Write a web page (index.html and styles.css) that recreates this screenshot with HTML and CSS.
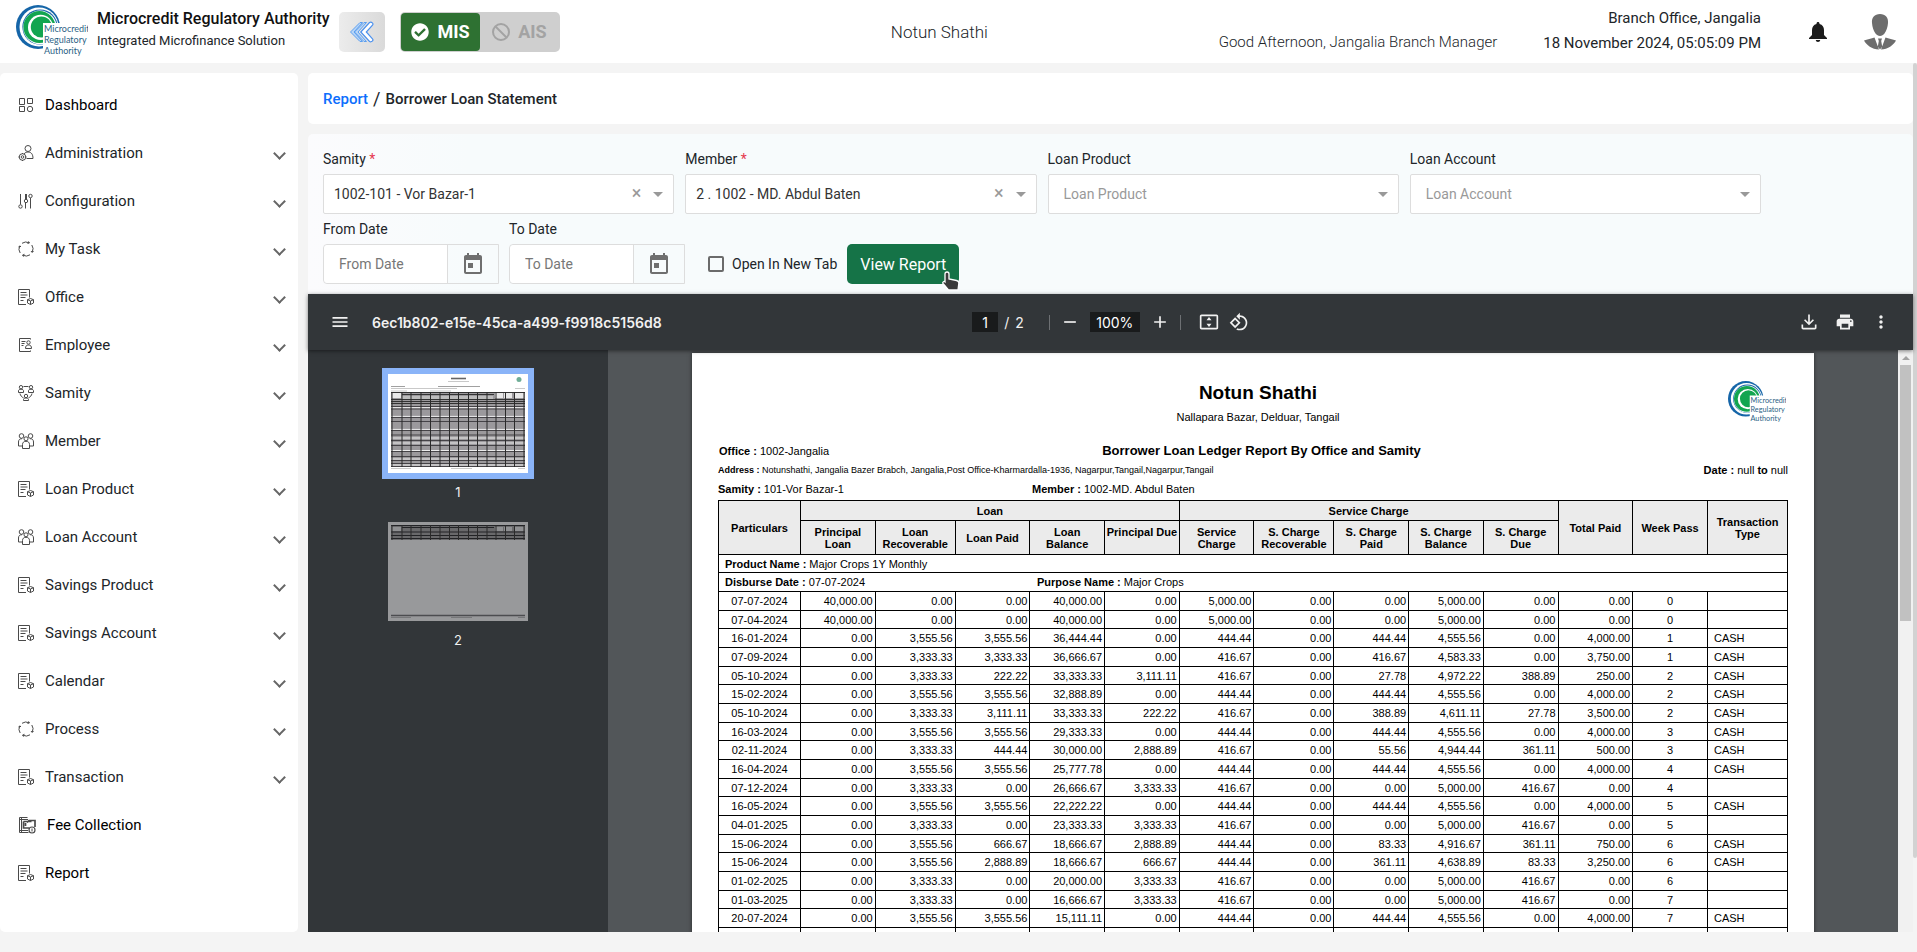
FILE: index.html
```html
<!DOCTYPE html>
<html lang="en">
<head>
    <meta charset="UTF-8">
    <meta name="viewport" content="width=device-width, initial-scale=1.0">
    <title>Borrower Loan Statement</title>
    <link rel="stylesheet" href="styles.css">
</head>
<body>

<!-- Shared icons -->
<svg class="sprite" aria-hidden="true">
    <symbol id="logo" viewBox="0 0 72 52">
        <circle cx="22" cy="22" r="22" fill="#1565a8"/>
        <circle cx="23" cy="22" r="19.5" fill="#fff"/>
        <circle cx="24" cy="22" r="17.6" fill="#1565a8"/>
        <circle cx="24" cy="22.4" r="16.8" fill="#fff"/>
        <circle cx="23.4" cy="22" r="16" fill="#12a550"/>
        <circle cx="24.6" cy="22.4" r="12.6" fill="#fff"/>
        <circle cx="25.4" cy="22" r="10.6" fill="#12a550"/>
        <path d="M27 18h45v34H27z" fill="#fff"/>
        <g fill="#2c5f85" font-family="Lato, sans-serif" font-size="9">
            <text x="28" y="27">Microcredit</text>
            <text x="28" y="38">Regulatory</text>
            <text x="28" y="49">Authority</text>
        </g>
    </symbol>
    <symbol id="i-dashboard" viewBox="0 0 16 16">
        <path d="M1.500 1.500h5v6h-5zM9.500 1.500h5v5h-5zM1.500 9.500h5v5h-5z"/>
        <circle cx="12" cy="12" r="2.700"/>
    </symbol>
    <symbol id="i-admin" viewBox="0 0 16 16">
        <circle cx="10" cy="3.500" r="3"/>
        <path d="M6 9c1-1.500 2.500-2 4-2 3.500 0 5 2.500 5 6.500H8.500"/>
        <circle cx="4.500" cy="12" r="3.300"/>
        <circle cx="4.500" cy="12" r="1.300"/>
        <path d="M4.500 8v1M4.500 15v1M.5 12h1M7.500 12h1"/>
    </symbol>
    <symbol id="i-config" viewBox="0 0 16 16">
        <path d="M2.500 1v10.500M7.500 1v5M7.500 10v5.500M8.500 1v5M12.500 5v10.500"/>
        <circle cx="2.500" cy="13.500" r="1.700"/>
        <circle cx="8" cy="8" r="1.700"/>
        <circle cx="12.500" cy="3" r="1.700"/>
    </symbol>
    <symbol id="i-cycle" viewBox="0 0 16 16">
        <path d="M4 2.300A7 7 0 0 1 11 1.700M13.800 4A7 7 0 0 1 14.300 11M12 13.800A7 7 0 0 1 5 14.300M2.200 12A7 7 0 0 1 1.700 5"/>
        <path d="M9.500 2.500l2-.6-1-1.500M13 10l1.200 1.500 1.300-1.500M6.500 13.300l-2 .8 1 1.500M.5 6.300l1.300-1.500L3 6"/>
    </symbol>
    <symbol id="i-doc" viewBox="0 0 16 16">
        <path d="M8 15.500H.5V.5h11v8M2.500 3.500h6M2.500 6h7M2.500 8.500h5M2.500 11.500h3"/>
        <path d="M12.500 9.500l3 1.200v3.300l-3 1.500-3-1.500v-3.300zM9.500 10.700l3 1.300 3-1.300M12.500 12v3.500"/>
    </symbol>
    <symbol id="i-employee" viewBox="0 0 16 16">
        <path d="M12.500 2.500v-1h-11v13h11v-1M3.500 4.500h4M3.500 6.500h3M3.500 8.500h2"/>
        <circle cx="10.500" cy="5.500" r="1.700"/>
        <path d="M7.500 11.500c0-2.500 1-3.500 3-3.500s3 1 3 3.500z"/>
    </symbol>
    <symbol id="i-samity" viewBox="0 0 16 16">
        <circle cx="3" cy="2.200" r="1.700"/>
        <circle cx="13" cy="2.200" r="1.700"/>
        <circle cx="8" cy="11" r="1.700"/>
        <path d="M.5 7.500V5.800c0-1 1-1.600 2.500-1.600s2.500.6 2.500 1.600v1.700zM10.500 7.500V5.800c0-1 1-1.600 2.500-1.600s2.500.6 2.500 1.600v1.700zM5.500 15.500v-1c0-1 1-1.500 2.500-1.500s2.500.5 2.500 1.500v1zM5.500 1.500h5M2 8.500c.5 2 1.500 3.500 3.500 4.300M14 8.500c-.5 2-1.500 3.500-3.500 4.300"/>
    </symbol>
    <symbol id="i-people" viewBox="0 0 16 16">
        <circle cx="3.500" cy="3" r="2.300"/>
        <circle cx="12.500" cy="3" r="2.300"/>
        <circle cx="8" cy="5.800" r="2"/>
        <path d="M4.500 15.500v-4c0-2 1.300-3.200 3.500-3.200s3.500 1.200 3.500 3.200v4zM4 13H.5V9c0-2 1-3.300 3.500-3.300M12 13h3.500V9c0-2-1-3.300-3.500-3.300"/>
    </symbol>
    <symbol id="i-fee" viewBox="0 0 18 18">
        <path d="M9.500 1.500h-8v15h9M3.500 2v14M2 3.500h8M2 14.500h8"/>
        <path d="M5.500 5.500h8M5.500 5.500v6.500h6M7.500 7v3M9 6.500l2-2h6V11" stroke-width="1.700"/>
        <circle cx="14" cy="14" r="3" stroke-width="1.200"/>
        <path d="M14 12.500v3"/>
    </symbol>
    <symbol id="i-calendar" viewBox="0 0 24 24">
        <path d="M19 3h-1V1h-2v2H8V1H6v2H5c-1.110 0-2 .9-2 2v15c0 1.100.9 2 2 2h14c1.100 0 2-.9 2-2V5c0-1.100-.9-2-2-2zm0 17H5V8h14v12zM7 11h5v5H7z"/>
    </symbol>
    <!-- Grid of the report pages, used by both thumbnails -->
    <symbol id="thumb-cols" viewBox="0 0 134 80" preserveAspectRatio="xMidYMin slice">
        <path d="M1 0v80M11 0v80M20 0v80M30 0v80M39.500 0v80M49 0v80M58.500 0v80M67.500 0v80M77.500 0v80M86.500 0v80M96 0v80M105 0v80M114.500 0v80M123.500 0v80M133 0v80" stroke="#2a2a2a"/>
    </symbol>
</svg>

<header class="topbar">
    <div class="brand">
        <svg class="brand-logo" role="img" aria-label="Logo"><use href="#logo"/></svg>
        <div class="brand-text">
            <h1>Microcredit Regulatory Authority</h1>
            <p>Integrated Microfinance Solution</p>
        </div>
    </div>
    <button class="collapse-btn" aria-label="Collapse menu">
        <svg viewBox="0 0 26 22" width="26" height="22">
            <path d="M11 1.500h2.500L5 11l8.500 9.500H11L1.500 11zM15 1.500h2.500L9 11l8.500 9.500H15L5.500 11z" fill="#b9d6f7" stroke="#5c9ff0"/>
            <path d="M20.500 1.500c2-1 4.500 1 3 2.700L17.300 11l6.200 6.800c1.500 1.700-1 3.700-3 2.700L11.800 11z" fill="#fff" stroke="#4a90ee" stroke-width="1.200"/>
        </svg>
    </button>
    <div class="mode-toggle">
        <button class="mode active">
            <svg viewBox="0 0 512 512" width="18" height="18"><path fill="currentColor" d="M504 256c0 137-111 248-248 248S8 393 8 256 119 8 256 8s248 111 248 248zM227.300 387.300l184-184c6.200-6.200 6.200-16.400 0-22.600l-22.600-22.600c-6.200-6.200-16.400-6.200-22.600 0L216 308.100l-70.100-70.100c-6.200-6.200-16.400-6.200-22.600 0l-22.600 22.600c-6.200 6.200-6.200 16.400 0 22.600l104 104c6.200 6.300 16.400 6.300 22.600.1z"/></svg>
            MIS
        </button>
        <button class="mode">
            <svg viewBox="0 0 18 18" width="18" height="18" fill="none" stroke="currentColor" stroke-width="2"><circle cx="9" cy="9" r="8"/><path d="M3.500 3.500l11 11"/></svg>
            AIS
        </button>
    </div>
    <p class="org-name">Notun Shathi</p>
    <p class="greeting">Good Afternoon, Jangalia Branch Manager</p>
    <div class="office">
        <p>Branch Office, Jangalia</p>
        <p>18 November 2024, 05:05:09 PM</p>
    </div>
    <button class="icon-btn" aria-label="Notifications">
        <svg viewBox="0 0 18 20" width="18" height="20"><path fill="#1c1c1c" d="M9 0c.9 0 1.500.6 1.500 1.500v.6C13.500 2.800 15 5.300 15 8v5l3 3v1H0v-1l3-3V8c0-2.700 1.500-5.200 4.500-5.900v-.6C7.500.6 8.100 0 9 0zM6.800 18h4.400c0 1.200-1 2-2.200 2s-2.200-.8-2.200-2z"/></svg>
    </button>
    <button class="icon-btn avatar" aria-label="Profile">
        <svg viewBox="0 0 32 36" width="32" height="36" fill="#6d6d6d">
            <path d="M16 0c5.500 0 8.500 3.500 8 9-.3 4-1.500 8-3.500 10.500-1.200 1.500-2.700 2.500-4.500 2.500s-3.300-1-4.500-2.500C9.500 17 8.300 13 8 9c-.5-5.500 2.500-9 8-9z"/>
            <path d="M10.500 23.500L15 35.500C8 35.500 2.500 31 0 26.500c3-1.300 7.500-1.800 10.500-3zM21.500 23.500L17 35.500c7 0 12.500-4.500 15-9-3-1.300-7.500-1.800-10.500-3zM14 24.500h4l-.8 2.500 1 5.500-2.200 3-2.200-3 1-5.500z"/>
        </svg>
    </button>
</header>

<div class="layout">
    <!-- Sidebar -->
    <nav class="sidebar">
        <a href="#" class="nav-item"><svg><use href="#i-dashboard"/></svg><span>Dashboard</span></a>
        <a href="#" class="nav-item has-sub"><svg><use href="#i-admin"/></svg><span>Administration</span></a>
        <a href="#" class="nav-item has-sub"><svg><use href="#i-config"/></svg><span>Configuration</span></a>
        <a href="#" class="nav-item has-sub"><svg><use href="#i-cycle"/></svg><span>My Task</span></a>
        <a href="#" class="nav-item has-sub"><svg><use href="#i-doc"/></svg><span>Office</span></a>
        <a href="#" class="nav-item has-sub"><svg><use href="#i-employee"/></svg><span>Employee</span></a>
        <a href="#" class="nav-item has-sub"><svg><use href="#i-samity"/></svg><span>Samity</span></a>
        <a href="#" class="nav-item has-sub"><svg><use href="#i-people"/></svg><span>Member</span></a>
        <a href="#" class="nav-item has-sub"><svg><use href="#i-doc"/></svg><span>Loan Product</span></a>
        <a href="#" class="nav-item has-sub"><svg><use href="#i-people"/></svg><span>Loan Account</span></a>
        <a href="#" class="nav-item has-sub"><svg><use href="#i-doc"/></svg><span>Savings Product</span></a>
        <a href="#" class="nav-item has-sub"><svg><use href="#i-doc"/></svg><span>Savings Account</span></a>
        <a href="#" class="nav-item has-sub"><svg><use href="#i-doc"/></svg><span>Calendar</span></a>
        <a href="#" class="nav-item has-sub"><svg><use href="#i-cycle"/></svg><span>Process</span></a>
        <a href="#" class="nav-item has-sub"><svg><use href="#i-doc"/></svg><span>Transaction</span></a>
        <a href="#" class="nav-item wide-icon"><svg><use href="#i-fee"/></svg><span>Fee Collection</span></a>
        <a href="#" class="nav-item"><svg><use href="#i-doc"/></svg><span>Report</span></a>
    </nav>

    <main class="content">
        <div class="breadcrumb">
            <a href="#">Report</a> <span class="slash">/</span> <strong>Borrower Loan Statement</strong>
        </div>

        <form class="filters" onsubmit="return false">
            <div class="filter-row">
                <div class="field">
                    <label for="samity">Samity <span class="req">*</span></label>
                    <div class="select-box">
                        <select id="samity"><option>1002-101 - Vor Bazar-1</option></select>
                        <button type="button" class="clear" aria-label="Clear samity">×</button>
                    </div>
                </div>
                <div class="field">
                    <label for="member">Member <span class="req">*</span></label>
                    <div class="select-box">
                        <select id="member"><option>2 . 1002 - MD. Abdul Baten</option></select>
                        <button type="button" class="clear" aria-label="Clear member">×</button>
                    </div>
                </div>
                <div class="field">
                    <label for="loanProduct">Loan Product</label>
                    <div class="select-box">
                        <select id="loanProduct" class="empty"><option>Loan Product</option></select>
                    </div>
                </div>
                <div class="field">
                    <label for="loanAccount">Loan Account</label>
                    <div class="select-box">
                        <select id="loanAccount" class="empty"><option>Loan Account</option></select>
                    </div>
                </div>
            </div>
            <div class="filter-row dates">
                <div class="date-field">
                    <label for="fromDate">From Date</label>
                    <div class="date-box">
                        <input type="text" id="fromDate" placeholder="From Date">
                        <button type="button" aria-label="Pick from date"><svg width="24" height="24"><use href="#i-calendar"/></svg></button>
                    </div>
                </div>
                <div class="date-field">
                    <label for="toDate">To Date</label>
                    <div class="date-box">
                        <input type="text" id="toDate" placeholder="To Date">
                        <button type="button" aria-label="Pick to date"><svg width="24" height="24"><use href="#i-calendar"/></svg></button>
                    </div>
                </div>
                <label class="new-tab"><input type="checkbox"> Open In New Tab</label>
                <button type="submit" class="view-btn">View Report
                    <svg class="pointer" viewBox="0 0 18 20" width="18" height="20"><path d="M5 1c1.200 0 2 .8 2 2v5l7.500 1.500c1.500.3 2.500 1.300 2.300 3L16 19H6.500L1 12.500c-.8-1 .8-2.700 2-1.700V3c0-1.200.8-2 2-2z" fill="#3a3a3a" stroke="#fff" stroke-width="1.300"/></svg>
                </button>
            </div>
        </form>

        <!-- PDF viewer -->
        <section class="viewer">
            <div class="pdf-bar">
                <div class="bar-left">
                    <button aria-label="Menu"><svg viewBox="0 0 24 24"><path d="M3 18h18v-2H3v2zm0-5h18v-2H3v2zm0-7v2h18V6H3z"/></svg></button>
                    <span class="file-name">6ec1b802-e15e-45ca-a499-f9918c5156d8</span>
                </div>
                <div class="bar-center">
                    <div class="page-nav">
                        <input type="text" class="page-input" value="1" aria-label="Page number">
                        <span>/</span>
                        <span>2</span>
                    </div>
                    <i class="sep"></i>
                    <button aria-label="Zoom out"><svg viewBox="0 0 24 24"><path d="M5 11h14v2H5z"/></svg></button>
                    <input type="text" class="zoom-input" value="100%" aria-label="Zoom">
                    <button aria-label="Zoom in"><svg viewBox="0 0 24 24"><path d="M19 13h-6v6h-2v-6H5v-2h6V5h2v6h6z"/></svg></button>
                    <i class="sep"></i>
                    <button class="fit" aria-label="Fit to page"><svg viewBox="0 0 24 24"><path d="M21 3H3c-1.100 0-2 .9-2 2v14c0 1.100.9 2 2 2h18c1.100 0 2-.9 2-2V5c0-1.100-.9-2-2-2zm0 16H3V5h18v14zM12 6l-3 4h6zM12 18l-3-4h6z"/></svg></button>
                    <button aria-label="Rotate"><svg viewBox="0 0 24 24"><path d="M7.340 6.410L.86 12.900l6.490 6.480 6.490-6.480-6.500-6.490zM3.690 12.900l3.660-3.660L11 12.900l-3.660 3.660-3.650-3.660zm15.670-6.260C17.610 4.880 15.300 4 13 4V.76L8.760 5 13 9.240V6c1.790 0 3.580.68 4.950 2.050 2.730 2.730 2.730 7.170 0 9.900C16.580 19.320 14.790 20 13 20c-.97 0-1.940-.21-2.840-.61l-1.490 1.490C10.020 21.620 11.510 22 13 22c2.300 0 4.610-.88 6.360-2.640 3.520-3.510 3.520-9.210 0-12.720z"/></svg></button>
                </div>
                <div class="bar-right">
                    <button aria-label="Download"><svg viewBox="0 0 24 24"><path d="M11 3h2v9.200l3.600-3.600L18 10l-6 6-6-6 1.400-1.400 3.600 3.600zM3 15h2v4h14v-4h2v4c0 1.100-.9 2-2 2H5c-1.100 0-2-.9-2-2z"/></svg></button>
                    <button aria-label="Print"><svg viewBox="0 0 24 24"><path d="M19 8H5c-1.660 0-3 1.340-3 3v6h4v4h12v-4h4v-6c0-1.660-1.340-3-3-3zm-3 11H8v-5h8v5zm3-7c-.55 0-1-.45-1-1s.45-1 1-1 1 .45 1 1-.45 1-1 1zm-1-9H6v4h12V3z"/></svg></button>
                    <button aria-label="More"><svg viewBox="0 0 24 24"><path d="M12 8c1.100 0 2-.9 2-2s-.9-2-2-2-2 .9-2 2 .9 2 2 2zm0 2c-1.100 0-2 .9-2 2s.9 2 2 2 2-.9 2-2-.9-2-2-2zm0 6c-1.100 0-2 .9-2 2s.9 2 2 2 2-.9 2-2-.9-2-2-2z"/></svg></button>
                </div>
            </div>

            <div class="pdf-body">
                <aside class="thumbs">
                    <button class="thumb current">
                        <svg viewBox="0 0 140 99" width="140" height="99">
                            <rect width="140" height="99" fill="#fff"/>
                            <path d="M63 4.500h15" stroke="#666" stroke-width="1.600"/>
                            <path d="M60 7.500h21M3 14.500h66M127 14.500h10M3 17h16M42 17h21M3 94.500h20M63 94.500h21M130 94.500h7" stroke="#bbb" stroke-width=".8"/>
                            <path d="M3 12.500h14M50 12.500h42" stroke="#888" stroke-width=".8"/>
                            <circle cx="131" cy="5.500" r="2.500" fill="#6fae97"/>
                            <rect x="3" y="18" width="134" height="75" fill="#9b999c"/>
                            <path d="M4 21.500h9M107 21.500h8M116 21.500h8M126 21.500h10" stroke="#e8e8e8" stroke-width="5"/>
                            <path d="M14 23.500h91" stroke="#bcbcbc" stroke-width="3"/>
                            <path d="M3 18.500h134M14 20.500h92M3 25.500h134M3 27.500h134M3 29.500h134" stroke="#333"/>
                            <path d="M3 32.500h134M3 43.500h134M3 56.500h134M3 66.500h134M3 77.500h134M3 86.500h134M3 92.500h134M3 35h134M3 47.500h134M3 61h134M3 71.500h134M3 82.500h134M3 89.500h134" stroke="#454347"/>
                            <path d="M3 33.600h134M3 42.400h134M3 55.400h134M3 64h134M3 76.500h134M3 85h134M3 91h134M3 69h134" stroke="#ececec"/>
                            <use href="#thumb-cols" x="3" y="18" width="134" height="75"/>
                        </svg>
                    </button>
                    <span class="thumb-label">1</span>
                    <button class="thumb">
                        <svg viewBox="0 0 140 99" width="140" height="99">
                            <rect width="140" height="99" fill="#98999b"/>
                            <rect x="3" y="3" width="134" height="15" fill="#69696b"/>
                            <path d="M4 7h9M107 7h8M116 7h8M126 7h10" stroke="#8f9092" stroke-width="4"/>
                            <path d="M3 3.500h134M14 5.500h92M3 10h134M3 13.500h134M3 16.500h134" stroke="#222326"/>
                            <use href="#thumb-cols" x="3" y="3" width="134" height="15"/>
                            <path d="M3 93.500h134" stroke="#4c4d50" stroke-width="1.500"/>
                            <path d="M3 95.500h20M63 95.500h21M130 95.500h7" stroke="#77787a"/>
                        </svg>
                    </button>
                    <span class="thumb-label">2</span>
                </aside>

                <div class="pages">
                    <article class="sheet">
                        <svg class="sheet-logo" role="img" aria-label="Logo"><use href="#logo"/></svg>
                        <h2>Notun Shathi</h2>
                        <p class="sheet-address">Nallapara Bazar, Delduar, Tangail</p>
                        <div class="sheet-row title-row">
                            <span><b>Office :</b> 1002-Jangalia</span>
                            <h3>Borrower Loan Ledger Report By Office and Samity</h3>
                        </div>
                        <div class="sheet-row">
                            <span class="small"><b>Address :</b> Notunshathi, Jangalia Bazer Brabch, Jangalia,Post Office-Kharmardalla-1936, Nagarpur,Tangail,Nagarpur,Tangail</span>
                            <span><b>Date :</b> null <b>to</b> null</span>
                        </div>
                        <div class="sheet-row">
                            <span class="samity"><b>Samity :</b> 101-Vor Bazar-1</span>
                            <span><b>Member :</b> 1002-MD. Abdul Baten</span>
                        </div>

                        <table class="ledger">
                            <colgroup>
                                <col class="c-date"><col><col class="c-wide"><col><col><col><col>
                                <col class="c-wide"><col><col><col><col><col><col class="c-wide">
                            </colgroup>
                            <thead>
                                <tr class="head-top">
                                    <th rowspan="2">Particulars</th>
                                    <th colspan="5">Loan</th>
                                    <th colspan="5">Service Charge</th>
                                    <th rowspan="2">Total Paid</th>
                                    <th rowspan="2">Week Pass</th>
                                    <th rowspan="2">Transaction Type</th>
                                </tr>
                                <tr class="head-sub">
                                    <th>Principal Loan</th>
                                    <th>Loan Recoverable</th>
                                    <th>Loan Paid</th>
                                    <th>Loan Balance</th>
                                    <th class="top">Principal Due</th>
                                    <th>Service Charge</th>
                                    <th>S. Charge Recoverable</th>
                                    <th>S. Charge Paid</th>
                                    <th>S. Charge Balance</th>
                                    <th>S. Charge Due</th>
                                </tr>
                            </thead>
                            <tbody id="ledgerBody">
                                <tr class="info">
                                    <td colspan="14"><b>Product Name :</b> Major Crops 1Y Monthly</td>
                                </tr>
                                <tr class="info">
                                    <td colspan="14"><div class="disburse"><span><b>Disburse Date :</b> 07-07-2024</span><span><b>Purpose Name :</b> Major Crops</span></div></td>
                                </tr>
                            </tbody>
                        </table>
                    </article>
                </div>
                <div class="pdf-scroll"><span class="up"></span><span class="bar"></span></div>
            </div>
        </section>
    </main>
    <div class="page-scroll"></div>
</div>

<script>
    // date, loan columns (5), service charge columns (5), total paid, week, type
    const rows = [
        ['07-07-2024', '40,000.00', '0.00', '0.00', '40,000.00', '0.00', '5,000.00', '0.00', '0.00', '5,000.00', '0.00', '0.00', '0', ''],
        ['07-04-2024', '40,000.00', '0.00', '0.00', '40,000.00', '0.00', '5,000.00', '0.00', '0.00', '5,000.00', '0.00', '0.00', '0', ''],
        ['16-01-2024', '0.00', '3,555.56', '3,555.56', '36,444.44', '0.00', '444.44', '0.00', '444.44', '4,555.56', '0.00', '4,000.00', '1', 'CASH'],
        ['07-09-2024', '0.00', '3,333.33', '3,333.33', '36,666.67', '0.00', '416.67', '0.00', '416.67', '4,583.33', '0.00', '3,750.00', '1', 'CASH'],
        ['05-10-2024', '0.00', '3,333.33', '222.22', '33,333.33', '3,111.11', '416.67', '0.00', '27.78', '4,972.22', '388.89', '250.00', '2', 'CASH'],
        ['15-02-2024', '0.00', '3,555.56', '3,555.56', '32,888.89', '0.00', '444.44', '0.00', '444.44', '4,555.56', '0.00', '4,000.00', '2', 'CASH'],
        ['05-10-2024', '0.00', '3,333.33', '3,111.11', '33,333.33', '222.22', '416.67', '0.00', '388.89', '4,611.11', '27.78', '3,500.00', '2', 'CASH'],
        ['16-03-2024', '0.00', '3,555.56', '3,555.56', '29,333.33', '0.00', '444.44', '0.00', '444.44', '4,555.56', '0.00', '4,000.00', '3', 'CASH'],
        ['02-11-2024', '0.00', '3,333.33', '444.44', '30,000.00', '2,888.89', '416.67', '0.00', '55.56', '4,944.44', '361.11', '500.00', '3', 'CASH'],
        ['16-04-2024', '0.00', '3,555.56', '3,555.56', '25,777.78', '0.00', '444.44', '0.00', '444.44', '4,555.56', '0.00', '4,000.00', '4', 'CASH'],
        ['07-12-2024', '0.00', '3,333.33', '0.00', '26,666.67', '3,333.33', '416.67', '0.00', '0.00', '5,000.00', '416.67', '0.00', '4', ''],
        ['16-05-2024', '0.00', '3,555.56', '3,555.56', '22,222.22', '0.00', '444.44', '0.00', '444.44', '4,555.56', '0.00', '4,000.00', '5', 'CASH'],
        ['04-01-2025', '0.00', '3,333.33', '0.00', '23,333.33', '3,333.33', '416.67', '0.00', '0.00', '5,000.00', '416.67', '0.00', '5', ''],
        ['15-06-2024', '0.00', '3,555.56', '666.67', '18,666.67', '2,888.89', '444.44', '0.00', '83.33', '4,916.67', '361.11', '750.00', '6', 'CASH'],
        ['15-06-2024', '0.00', '3,555.56', '2,888.89', '18,666.67', '666.67', '444.44', '0.00', '361.11', '4,638.89', '83.33', '3,250.00', '6', 'CASH'],
        ['01-02-2025', '0.00', '3,333.33', '0.00', '20,000.00', '3,333.33', '416.67', '0.00', '0.00', '5,000.00', '416.67', '0.00', '6', ''],
        ['01-03-2025', '0.00', '3,333.33', '0.00', '16,666.67', '3,333.33', '416.67', '0.00', '0.00', '5,000.00', '416.67', '0.00', '7', ''],
        ['20-07-2024', '0.00', '3,555.56', '3,555.56', '15,111.11', '0.00', '444.44', '0.00', '444.44', '4,555.56', '0.00', '4,000.00', '7', 'CASH'],
        ['', '', '', '', '', '', '', '', '', '', '', '', '', '']
    ];

    const ledgerBody = document.getElementById('ledgerBody');
    rows.forEach(row => {
        const tr = document.createElement('tr');
        row.forEach(value => {
            const td = document.createElement('td');
            td.textContent = value;
            tr.appendChild(td);
        });
        ledgerBody.appendChild(tr);
    });
</script>

</body>
</html>
```
FILE: styles.css
```css
* {
    margin: 0;
    padding: 0;
    box-sizing: border-box;
}

body {
    font-family: Roboto, sans-serif;
    font-size: 15px;
    color: #212529;
    background-color: #f4f4f4;
    height: 100vh;
    display: flex;
    flex-direction: column;
    overflow: hidden;
}

button {
    border: none;
    background: none;
    font-family: inherit;
    cursor: pointer;
}

a {
    text-decoration: none;
}

.sprite {
    display: none;
}

/* Header */
.topbar {
    display: flex;
    align-items: center;
    flex-shrink: 0;
    height: 63px;
    padding: 0 21px 0 16px;
    background-color: #fff;
}

.brand {
    display: flex;
    align-items: center;
    gap: 9px;
    width: 323px;
    padding-bottom: 2px;
}

.brand-logo {
    width: 72px;
    height: 52px;
}

.brand-text {
    padding-bottom: 4px;
}

.brand h1 {
    font-size: 16px;
    font-weight: 500;
    line-height: 24px;
    color: #111;
}

.brand p {
    font-size: 13px;
    line-height: 20px;
}

.collapse-btn {
    display: flex;
    align-items: center;
    justify-content: center;
    width: 46px;
    height: 40px;
    border-radius: 5px;
    background: linear-gradient(90deg, #ececec, #dadada);
}

.mode-toggle {
    display: flex;
    margin-left: 15px;
    width: 160px;
    height: 40px;
    padding: 1px;
    border-radius: 5px;
    background-color: #cfcfcf;
}

.mode {
    display: flex;
    align-items: center;
    justify-content: center;
    gap: 8px;
    flex: 1;
    border-radius: 4px;
    color: #a3a3a3;
    font-size: 18px;
    font-weight: 700;
}

.mode.active {
    background-color: #2e7132;
    color: #fff;
}

.org-name {
    flex: 1;
    padding-left: 100px;
    text-align: center;
    font-size: 17px;
    font-weight: 300;
}

.greeting {
    align-self: flex-end;
    padding-bottom: 9px;
    line-height: 24px;
    font-weight: 300;
}

.office {
    margin-left: 46px;
    margin-right: 48px;
    padding-bottom: 2px;
    text-align: right;
    line-height: 25px;
}

.icon-btn {
    display: flex;
}

.avatar {
    margin-left: 37px;
}

/* Layout */
.layout {
    display: flex;
    flex: 1;
    min-height: 0;
}

.sidebar {
    width: 298px;
    flex-shrink: 0;
    margin: 10px 10px 20px 0;
    padding-top: 8px;
    border-radius: 5px;
    background-color: #fff;
    overflow: hidden;
}

.nav-item {
    display: flex;
    align-items: center;
    gap: 11px;
    height: 48px;
    padding: 0 12px 0 18px;
    color: #000;
}

.nav-item.has-sub {
    color: #212529;
}

.nav-item svg {
    width: 16px;
    height: 16px;
    fill: none;
    stroke: #4a4a4a;
}

.nav-item span {
    flex: 1;
}

.nav-item.wide-icon svg {
    width: 18px;
    height: 18px;
}

.nav-item.has-sub::after {
    content: "";
    width: 7px;
    height: 7px;
    margin-right: 2px;
    border-right: 2px solid #666;
    border-bottom: 2px solid #666;
    transform: rotate(45deg);
}

.content {
    display: flex;
    flex-direction: column;
    flex: 1;
    min-width: 0;
    margin: 10px 0 20px;
}

.page-scroll {
    width: 4px;
    margin-bottom: 94px;
    border-radius: 2px;
    background-color: #d2d2d2;
}

.breadcrumb {
    display: flex;
    align-items: center;
    gap: 5px;
    height: 51px;
    padding: 0 15px;
    border-radius: 5px;
    background-color: #fff;
}

.breadcrumb a {
    color: #0d6efd;
    font-weight: 500;
}

.breadcrumb .slash {
    font-size: 18px;
}

.breadcrumb strong {
    font-weight: 500;
}

/* Filters */
.filters {
    margin-top: 10px;
    padding: 15px 15px 10px;
    border-radius: 5px 5px 0 0;
    background: linear-gradient(90deg, #fbfbfd, #f7fbfc 10%, #f7fbfc);
}

.filter-row {
    display: flex;
}

.filter-row label {
    display: block;
    font-size: 14px;
    line-height: 20px;
}

.req {
    color: #e5384f;
}

.field {
    width: 23%;
    padding-right: 11px;
}

.select-box {
    position: relative;
    margin-top: 5px;
}

.select-box::after {
    content: "";
    position: absolute;
    right: 11px;
    top: 18px;
    border: 5px solid transparent;
    border-top-color: #999;
    border-bottom: none;
}

select {
    appearance: none;
    width: 100%;
    height: 40px;
    padding: 0 10px;
    border: 1px solid #ddd;
    border-radius: 2px;
    background-color: #fff;
    color: #333;
    font-family: inherit;
    font-size: 14px;
}

select.empty {
    padding-left: 15px;
    color: #999;
}

.clear {
    position: absolute;
    right: 33px;
    top: 8px;
    color: #999;
    font-size: 18px;
    line-height: 22px;
}

.dates {
    align-items: flex-end;
    margin-top: 5px;
    gap: 10px;
}

.date-field {
    width: 176px;
}

.date-box {
    display: flex;
    height: 40px;
    margin-top: 5px;
    border: 1px solid #ddd;
    border-radius: 4px 0 0 4px;
}

.date-box input {
    flex: 1;
    min-width: 0;
    padding: 0 15px;
    border: none;
    border-radius: 4px 0 0 4px;
    background-color: #fff;
    font-family: inherit;
    font-size: 14px;
}

.date-box input::placeholder {
    color: #777;
}

.date-box button {
    display: flex;
    align-items: center;
    justify-content: center;
    width: 51px;
    border-left: 1px solid #ddd;
    fill: #6f6f6f;
}

.filter-row .new-tab {
    display: flex;
    align-items: center;
    gap: 8px;
    height: 40px;
    margin-left: 13px;
}

.new-tab input {
    appearance: none;
    width: 16px;
    height: 16px;
    border: 2px solid #6b6b6b;
    border-radius: 2px;
}

.view-btn {
    position: relative;
    width: 112px;
    height: 40px;
    border-radius: 5px;
    background-color: #157347;
    color: #fff;
    font-size: 16px;
}

.pointer {
    position: absolute;
    right: -1px;
    bottom: -7px;
}

/* PDF viewer */
.viewer {
    display: flex;
    flex-direction: column;
    flex: 1;
    min-height: 0;
    color: #f1f1f1;
}

.pdf-bar {
    display: flex;
    align-items: center;
    justify-content: space-between;
    flex-shrink: 0;
    height: 56px;
    padding: 0 22px;
    background-color: #323639;
    box-shadow: 0 1px 4px rgba(0, 0, 0, 0.5);
    font-family: Inter, sans-serif;
    z-index: 1;
}

.pdf-bar svg {
    display: block;
    width: 20px;
    height: 20px;
    fill: #f1f1f1;
}

.bar-left,
.bar-center,
.bar-right {
    display: flex;
    align-items: center;
}

.bar-left,
.bar-right {
    flex: 1;
}

.bar-left {
    gap: 22px;
}

.bar-right {
    justify-content: flex-end;
    gap: 16px;
}

.file-name {
    font-size: 14px;
    font-weight: 600;
}

.bar-center {
    gap: 10px;
    font-size: 14px;
}

.page-nav {
    display: flex;
    align-items: center;
    gap: 6px;
    margin-right: 15px;
}

.bar-center input {
    height: 20px;
    border: none;
    background-color: #191b1c;
    color: #fff;
    text-align: center;
    font-family: inherit;
    font-size: 14px;
}

.page-input {
    width: 26px;
}

.zoom-input {
    width: 50px;
}

.fit {
    margin-left: 8px;
}

.sep {
    width: 1px;
    height: 15px;
    background-color: #6d7073;
}

.pdf-body {
    display: flex;
    flex: 1;
    min-height: 0;
    background-color: #525659;
}

.thumbs {
    display: flex;
    flex-direction: column;
    align-items: center;
    width: 300px;
    flex-shrink: 0;
    padding-top: 18px;
    background-color: #323639;
}

.thumb {
    padding: 6px;
}

.thumb svg {
    display: block;
}

.thumb.current {
    background-color: #8ab4f8;
}

.thumb-label {
    margin: 3px 0 14px;
    font-family: Inter, sans-serif;
    font-size: 13px;
    line-height: 20px;
}

.pages {
    flex: 1;
    min-width: 0;
    padding-top: 3px;
    overflow: hidden;
}

.pdf-scroll {
    width: 15px;
    background-color: #f1f1f1;
}

.pdf-scroll .up {
    display: block;
    margin: 6px auto 5px;
    width: 8px;
    border: 4px solid transparent;
    border-top: none;
    border-bottom-color: #a3a3a3;
}

.pdf-scroll .bar {
    display: block;
    width: 11px;
    height: 44%;
    margin: 0 auto;
    background-color: #c1c1c1;
}

/* Report page, A4 landscape */
.sheet {
    position: relative;
    width: 1122px;
    max-width: 100%;
    margin: 0 auto;
    padding: 26px;
    background-color: #fff;
    box-shadow: 0 0 4px rgba(0, 0, 0, 0.5);
    color: #000;
    font-family: "Liberation Sans", Arial, sans-serif;
    font-size: 11px;
}

.sheet-logo {
    position: absolute;
    top: 26px;
    right: 28px;
    width: 58px;
    height: 46px;
}

.sheet h2 {
    padding-left: 10px;
    font-size: 19px;
    line-height: 28px;
    text-align: center;
}

.sheet-address {
    margin-bottom: 14px;
    padding-left: 10px;
    line-height: 20px;
    text-align: center;
}

.sheet-row {
    display: flex;
    justify-content: space-between;
    line-height: 19px;
}

.title-row {
    display: grid;
    grid-template-columns: 1fr auto 1fr;
    gap: 16px;
    padding-left: 1px;
    line-height: 20px;
}

.title-row h3 {
    padding-left: 16px;
    font-size: 13px;
}

.small {
    font-size: 9px;
}

.samity {
    width: 314px;
}

.samity + span {
    flex: 1;
}

.ledger {
    width: 100%;
    border-collapse: collapse;
    table-layout: fixed;
    margin-top: 1px;
}

.c-date {
    width: 82px;
}

.c-wide {
    width: 80px;
}

.ledger th,
.ledger td {
    border: 1px solid #000;
    line-height: 12px;
}

.ledger th {
    padding: 0 5px;
    background-color: #ebebeb;
    vertical-align: middle;
}

.ledger th.top {
    padding: 5px 0 0;
    vertical-align: top;
}

.head-top {
    height: 20px;
}

.head-sub {
    height: 34px;
}

.ledger td {
    padding: 0 2px;
    text-align: right;
}

.ledger td:first-child,
.ledger td:nth-child(13) {
    text-align: center;
}

.ledger td:last-child {
    padding-left: 6px;
    text-align: left;
}

.ledger tbody tr {
    height: 19px;
}

.ledger tbody tr:nth-child(3n + 1) {
    height: 18px;
}

.disburse {
    display: flex;
}

.disburse span:first-child {
    width: 312px;
}
```
